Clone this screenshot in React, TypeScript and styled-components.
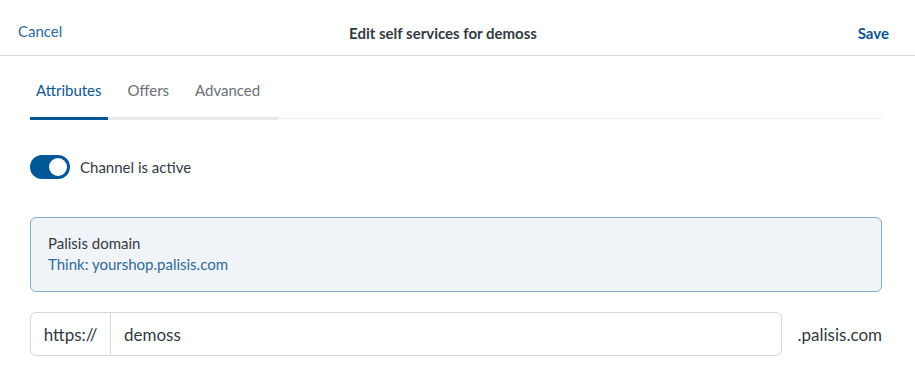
import React from "react";
import styled, { createGlobalStyle } from "styled-components";

const GlobalStyle = createGlobalStyle`
  html, body { margin: 0; padding: 0; background: #ffffff; }
  body { font-family: Lato, "Open Sans", sans-serif; color: #333a44; }
  * { box-sizing: border-box; }
`;

const Page = styled.div`
  width: 915px;
  height: 388px;
  background: #fff;
  overflow: hidden;
`;

const Header = styled.header`
  height: 56px;
  display: grid;
  grid-template-columns: 1fr auto 1fr;
  align-items: center;
  padding: 10px 26px 0 18px;
  border-bottom: 1px solid #d9d9df;
`;

const LinkButton = styled.button<{ $bold?: boolean; $right?: boolean }>`
  border: none;
  background: none;
  padding: 0;
  font-family: inherit;
  font-size: 15px;
  font-weight: ${(p) => (p.$bold ? 700 : 400)};
  color: ${(p) => (p.$bold ? "#0d5690" : "#2f6a99")};
  justify-self: ${(p) => (p.$right ? "end" : "start")};
  cursor: pointer;
  margin-top: ${(p) => (p.$bold ? "1px" : "-3px")};
`;

const Title = styled.h1`
  margin: 1px 21px 0 0;
  font-size: 15px;
  font-weight: 700;
  color: #333a44;
`;

const Body = styled.main`
  padding: 10px 33px 0 30px;
  display: flex;
  flex-direction: column;
`;

const TabBar = styled.div`
  display: flex;
  border-bottom: 1px solid #ececf0;
`;

const TabList = styled.div`
  display: flex;
  gap: 14px;
  padding-right: 12px;
  border-bottom: 3px solid #e8e8ee;
  margin-bottom: -2px;
`;

const Tab = styled.button<{ $active?: boolean }>`
  border: none;
  background: none;
  font-family: inherit;
  font-size: 15px;
  height: 54px;
  padding: 0 6px 6px;
  color: ${(p) => (p.$active ? "#0d5690" : "#6b6f76")};
  box-shadow: ${(p) => (p.$active ? "inset 0 -3px 0 #005795" : "none")};
  margin-bottom: -3px;
  cursor: pointer;
`;

const ToggleRow = styled.label`
  display: flex;
  align-items: center;
  gap: 10px;
  margin-top: 36px;
  font-size: 15px;
  color: #333a44;
`;

const Switch = styled.span<{ $on: boolean }>`
  position: relative;
  width: 40px;
  height: 24px;
  border-radius: 12px;
  background: ${(p) => (p.$on ? "#005795" : "#c8ccd2")};
  flex-shrink: 0;
  &::after {
    content: "";
    position: absolute;
    top: 3px;
    left: ${(p) => (p.$on ? "19px" : "3px")};
    width: 18px;
    height: 18px;
    border-radius: 50%;
    background: #fff;
  }
`;

const InfoBox = styled.div`
  margin-top: 38px;
  height: 75px;
  background: #f0f4f8;
  border: 1px solid #88abc8;
  border-radius: 6px;
  padding: 16px 17px;
  display: flex;
  flex-direction: column;
  gap: 3px;
  font-size: 15px;
  line-height: 18px;
`;

const InfoTitle = styled.div`
  color: #333a44;
`;

const InfoHint = styled.div`
  color: #2f6a99;
`;

const DomainRow = styled.div`
  margin-top: 20px;
  display: flex;
  align-items: center;
  gap: 16px;
`;

const InputGroup = styled.div`
  flex: 1;
  height: 44px;
  display: flex;
  border: 1px solid #d3d7de;
  border-radius: 6px;
  font-size: 17px;
`;

const Prefix = styled.span`
  width: 80px;
  display: flex;
  align-items: center;
  justify-content: center;
  border-right: 1px solid #d3d7de;
  color: #333a44;
`;

const Field = styled.input`
  flex: 1;
  border: none;
  outline: none;
  background: transparent;
  padding: 0 13px;
  font-family: inherit;
  font-size: 17px;
  color: #333a44;
`;

const Suffix = styled.span`
  font-size: 17px;
  color: #333a44;
`;

export default function App() {
  return (
    <Page>
      <GlobalStyle />
      <Header>
        <LinkButton>Cancel</LinkButton>
        <Title>Edit self services for demoss</Title>
        <LinkButton $bold $right>Save</LinkButton>
      </Header>
      <Body>
        <TabBar>
          <TabList>
            <Tab $active>Attributes</Tab>
            <Tab>Offers</Tab>
            <Tab>Advanced</Tab>
          </TabList>
        </TabBar>
        <ToggleRow>
          <Switch $on />
          Channel is active
        </ToggleRow>
        <InfoBox>
          <InfoTitle>Palisis domain</InfoTitle>
          <InfoHint>Think: yourshop.palisis.com</InfoHint>
        </InfoBox>
        <DomainRow>
          <InputGroup>
            <Prefix>https://</Prefix>
            <Field defaultValue="demoss" />
          </InputGroup>
          <Suffix>.palisis.com</Suffix>
        </DomainRow>
      </Body>
    </Page>
  );
}
